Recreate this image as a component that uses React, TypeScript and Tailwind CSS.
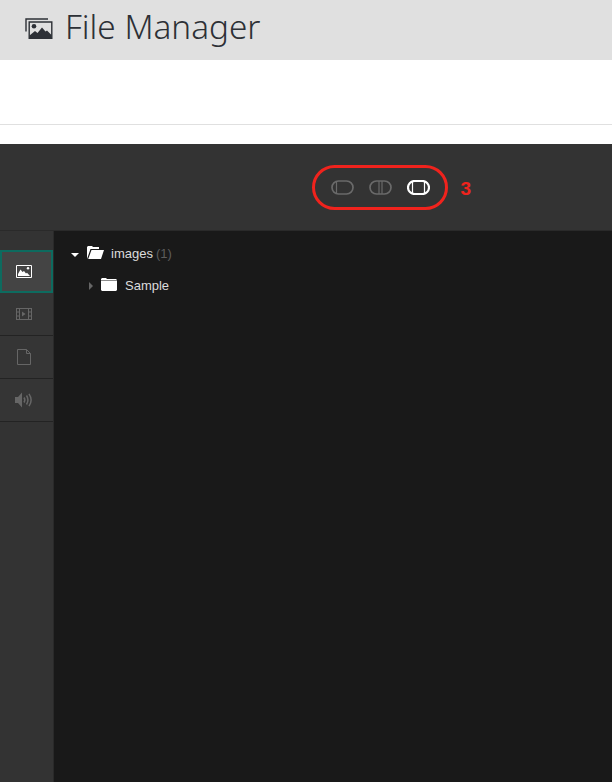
function PhotoStack() {
  return (
    <svg width="28" height="22" viewBox="0 0 28 22" className="mb-[3px] text-[#2d3036]">
      <path d="M1 14.500V2h22" fill="none" stroke="currentColor" strokeWidth="1.4" />
      <path d="M4.200 5h22.600v16.300H4.200z" fill="none" stroke="currentColor" strokeWidth="1.400" />
      <path d="M4.500 21v-2.500l5.500-4.500 2.500 2 4.500-5.500 3.500 4 1.500-1 4.500 4.500v3z" fill="currentColor" />
      <circle cx="9" cy="9.200" r="2.300" fill="currentColor" />
    </svg>
  );
}

function PanelToggle({ x1, x2, active }: { x1?: number; x2?: number; active?: boolean }) {
  const color = active ? '#ffffff' : '#6a6a6a';
  return (
    <svg width="23" height="15" viewBox="0 0 23 15" fill="none" stroke={color} strokeWidth={active ? 2.2 : 1.700}>
      <rect x="1" y="1" width="21" height="13" rx="6.500" />
      {x1 && <path d={`M${x1} 1v13`} strokeWidth={1.200} />}
      {x2 && <path d={`M${x2} 1v13`} strokeWidth={1.200} />}
    </svg>
  );
}

function ImageIcon() {
  return (
    <svg width="16" height="13" viewBox="0 0 16 13">
      <path d="M.5.5h15v12H.5z" fill="#444" stroke="#fff" />
      <path d="M2 11V9l2.500-4.500 2 2.500L8 6l2 2.500 1-.7L14 11z" fill="#fff" />
      <circle cx="12" cy="3.300" r="1.200" fill="#fff" />
    </svg>
  );
}

function FilmIcon() {
  return (
    <svg width="16" height="12" viewBox="0 0 16 12" fill="none" stroke="#666">
      <rect x="0.500" y="0.500" width="15" height="11" />
      <path d="M3.500 .5v11M12.500 .5v11M.5 4h3M.5 8h3M12.500 4h3M12.500 8h3" />
      <path d="M6 3.500l3.500 2.500L6 8.500z" fill="#666" stroke="none" />
    </svg>
  );
}

function FileIcon() {
  return (
    <svg width="14" height="16" viewBox="0 0 14 16" fill="none" stroke="#666">
      <path d="M.5.500h9l4 4v11H.5z" />
      <path d="M9.500.500v4h4" />
    </svg>
  );
}

function SpeakerIcon() {
  return (
    <svg width="18" height="16" viewBox="0 0 18 16" fill="none" stroke="#666">
      <path d="M0 5h3l4-4.500v15L3 11H0z" fill="#666" stroke="none" />
      <path d="M9 5.500c1 1.500 1 3.500 0 5" strokeWidth="1.500" />
      <path d="M11.500 3.500c1.800 2.800 1.800 6.200 0 9" strokeWidth="1.500" />
      <path d="M14 1.800c2.600 3.800 2.600 8.600 0 12.400" strokeWidth="1.500" />
    </svg>
  );
}

function FolderOpen() {
  return (
    <svg width="17" height="13" viewBox="0 0 17 13" fill="#fff">
      <path d="M0 13V1l1-1h4l1 1h6v2H3.500L0 13z" />
      <path d="M4.500 4H17l-3 9H1.200z" />
    </svg>
  );
}

function FolderClosed() {
  return (
    <svg width="16" height="13" viewBox="0 0 16 13" fill="#fff">
      <path d="M0 2V1l1-1h4l1 1h9l1 1v.500H0z" />
      <path d="M0 3h16v9l-1 1H1l-1-1z" />
    </svg>
  );
}

const sideItems = [
  { id: 'film', icon: <FilmIcon /> },
  { id: 'file', icon: <FileIcon /> },
  { id: 'audio', icon: <SpeakerIcon /> },
];

export default function App() {
  return (
    <div className="h-[782px] overflow-hidden bg-white font-['Liberation_Sans',sans-serif]">
      <div className="flex h-[60px] items-center gap-[12px] bg-[#e0e0e0] pb-[1px] pl-[25px]">
        <PhotoStack />
        <h1 className="mb-[5px] font-['Noto_Sans',sans-serif] text-[33.300px] font-light leading-none text-[#2d3036]">
          File Manager
        </h1>
      </div>
      <div className="h-[65px] border-b border-[#e0e0e0]" />
      <div className="h-[19px]" />

      <div className="flex h-[87px] items-center justify-end gap-[12px] border-b border-[#2a2a2a] bg-[#333333] pr-[141px]">
        <div className="mt-[1px] flex h-[45px] w-[136px] items-center justify-center gap-[15px] rounded-full border-[3px] border-[#f0231d]">
          <PanelToggle x1={5.500} />
          <PanelToggle x1={10} x2={13} />
          <PanelToggle x1={5.500} x2={17.500} active />
        </div>
        <span className="mt-[2px] text-[19px] font-bold leading-none text-[#f0231d]">3</span>
      </div>

      <div className="flex h-[551px]">
        <div className="w-[54px] border-r border-[#2a2a2a] bg-[#333333] pt-[19px]">
          <div className="flex h-[43px] items-center justify-center border-2 border-[#0d6b5f] bg-[#444444] pr-[5px]">
            <ImageIcon />
          </div>
          {sideItems.map((item) => (
            <div
              key={item.id}
              className="flex h-[43px] items-center justify-center border-b border-[#232323] bg-[#353535] pr-[5px]"
            >
              {item.icon}
            </div>
          ))}
        </div>

        <div className="flex-1 bg-[#191919] pt-[14px] text-[13px] text-[#dcdcdc]">
          <div className="flex h-[18px] items-center pl-[17px]">
            <span className="mt-[2px] h-0 w-0 border-x-[4px] border-t-[4px] border-x-transparent border-t-white" />
            <span className="ml-[8px] mb-[3px]"><FolderOpen /></span>
            <span className="ml-[7px]">images</span>
            <span className="ml-[3px] text-[#5c5c5c]">(1)</span>
          </div>
          <div className="mt-[14px] flex h-[18px] items-center pl-[35px]">
            <span className="h-0 w-0 border-y-[4px] border-l-[4px] border-y-transparent border-l-[#666666]" />
            <span className="ml-[8px] mb-[3px]"><FolderClosed /></span>
            <span className="ml-[8px]">Sample</span>
          </div>
        </div>
      </div>
    </div>
  );
}
